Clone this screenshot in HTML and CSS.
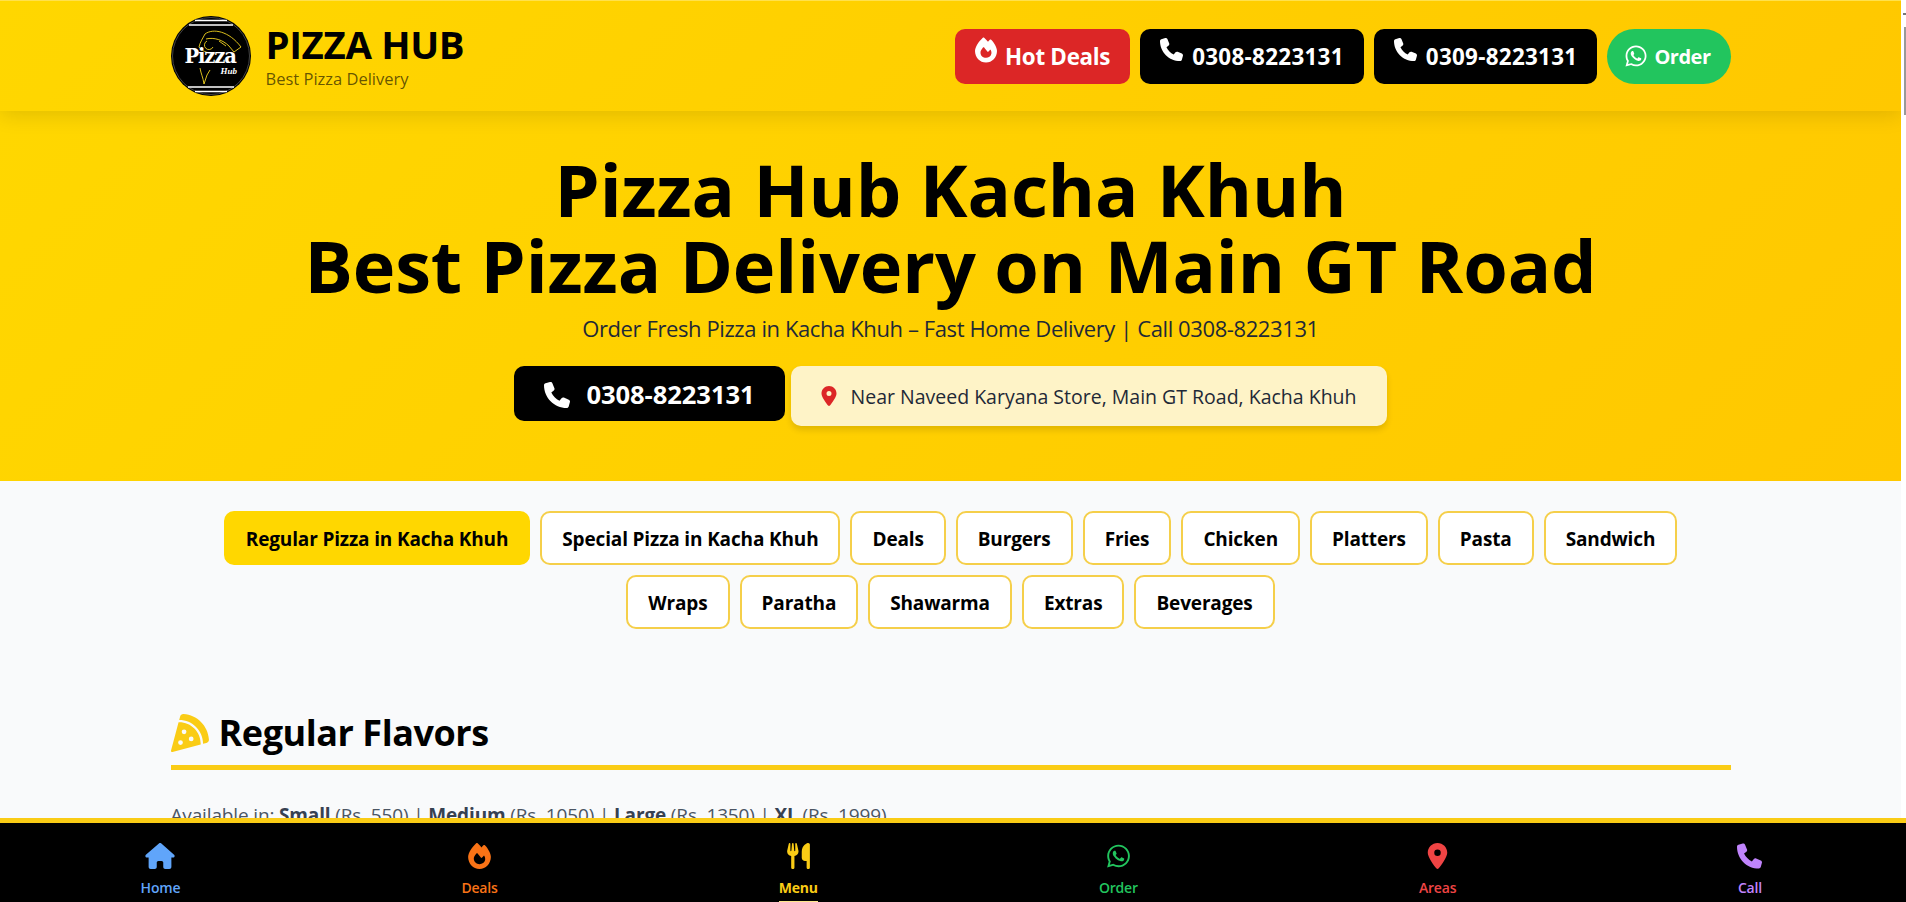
FILE: index.html
```html
<!DOCTYPE html>
<html lang="en">
<head>
<meta charset="utf-8">
<title>Pizza Hub Kacha Khuh</title>
<link rel="stylesheet" href="styles.css">
</head>
<body>
<svg class="defs" width="0" height="0" aria-hidden="true">
  <defs>
    <symbol id="i-phone" viewBox="0 0 512 512"><path fill="currentColor" d="M164.900 24.600c-7.700-18.600-28-28.500-47.400-23.200l-88 24C12.100 30.200 0 46 0 64C0 311.400 200.600 512 448 512c18 0 33.800-12.100 38.600-29.500l24-88c5.300-19.400-4.600-39.700-23.200-47.400l-96-40c-16.300-6.800-35.200-2.100-46.300 11.600L304.700 368C234.300 334.700 177.300 277.700 144 207.300L193.300 167c13.700-11.200 18.400-30 11.600-46.300l-40-96z"/></symbol>
    <symbol id="i-fire" viewBox="0 0 448 512"><path fill="currentColor" d="M159.300 5.400c7.800-7.300 19.900-7.200 27.700 .1c27.600 25.900 53.500 53.800 77.700 84c11-14.400 23.500-30.100 37-42.900c7.900-7.400 20.100-7.400 28 .1c34.600 33 63.900 76.600 84.500 118c20.300 40.800 33.800 82.500 33.800 111.900C448 404.200 348.200 512 224 512C98.400 512 0 404.100 0 276.500c0-38.400 17.800-85.300 45.400-131.700C73.300 97.700 112.700 48.600 159.300 5.400zM225.700 416c25.300 0 47.700-7 68.800-21c42.100-29.400 53.400-88.200 28.100-134.400c-4.500-9-16-9.600-22.500-2l-25.200 29.300c-6.600 7.600-18.500 7.400-24.700-.5c-16.500-21-46-58.500-62.800-79.800c-6.300-8-18.300-8.100-24.700-.1c-33.800 42.500-50.800 69.300-50.800 99.400C112 375.400 162.600 416 225.700 416z"/></symbol>
    <symbol id="i-wa" viewBox="0 0 448 512"><path fill="currentColor" d="M380.900 97.100C339 55.100 283.200 32 223.900 32c-122.400 0-222 99.600-222 222 0 39.100 10.200 77.300 29.600 111L0 480l117.700-30.900c32.400 17.700 68.900 27 106.100 27h.1c122.300 0 224.100-99.600 224.100-222 0-59.300-25.200-115-67.100-157zm-157 341.600c-33.200 0-65.700-8.900-94-25.700l-6.700-4-69.800 18.300L72 359.200l-4.400-7c-18.500-29.400-28.200-63.300-28.200-98.200 0-101.700 82.800-184.500 184.600-184.500 49.300 0 95.600 19.200 130.400 54.100 34.800 34.900 56.200 81.200 56.100 130.500 0 101.800-84.900 184.600-186.600 184.600zm101.200-138.200c-5.500-2.800-32.800-16.200-37.900-18-5.100-1.900-8.800-2.800-12.500 2.800-3.700 5.600-14.300 18-17.600 21.800-3.200 3.700-6.500 4.200-12 1.400-32.600-16.300-54-29.100-75.500-66-5.700-9.800 5.700-9.100 16.300-30.300 1.800-3.700 .9-6.900-.5-9.700-1.400-2.800-12.500-30.100-17.100-41.200-4.500-10.800-9.100-9.300-12.500-9.500-3.200-.2-6.900-.2-10.600-.2-3.700 0-9.700 1.400-14.800 6.900-5.100 5.600-19.400 19-19.400 46.300 0 27.300 19.900 53.700 22.600 57.400 2.800 3.700 39.100 59.700 94.800 83.800 35.200 15.200 49 16.500 66.600 13.900 10.700-1.600 32.800-13.400 37.400-26.400 4.600-13 4.600-24.100 3.200-26.400-1.300-2.500-5-3.900-10.500-6.600z"/></symbol>
    <symbol id="i-pin" viewBox="0 0 384 512"><path fill="currentColor" d="M215.700 499.200C267 435 384 279.400 384 192C384 86 298 0 192 0S0 86 0 192c0 87.400 117 243 168.300 307.200c12.300 15.300 35.100 15.300 47.400 0zM192 128a64 64 0 1 1 0 128 64 64 0 1 1 0-128z"/></symbol>
    <symbol id="i-home" viewBox="0 0 576 512"><path fill="currentColor" d="M575.800 255.500c0 18-15 32.100-32 32.100h-32l.7 160.200c0 2.700-.2 5.400-.5 8.100V472c0 22.100-17.900 40-40 40H456c-1.100 0-2.200 0-3.300-.1c-1.400 .1-2.800 .1-4.200 .1H416 392c-22.100 0-40-17.900-40-40V448 384c0-17.700-14.300-32-32-32H256c-17.700 0-32 14.300-32 32v64 24c0 22.100-17.900 40-40 40H160 128.100c-1.500 0-3-.1-4.500-.2c-1.200 .1-2.400 .2-3.600 .2H104c-22.100 0-40-17.900-40-40V360c0-.9 0-1.900 .1-2.800V287.600H32c-18 0-32-14-32-32.100c0-9 3-17 10-24L266.400 8c7-7 15-8 22-8s15 2 21 7L564.800 231.500c8 7 12 15 11 24z"/></symbol>
    <symbol id="i-menu" viewBox="0 0 448 512"><path fill="currentColor" d="M416 0C400 0 288 32 288 176V288c0 35.300 28.700 64 64 64h32V480c0 17.700 14.300 32 32 32s32-14.300 32-32V352 240 32c0-17.700-14.300-32-32-32zM64 16C64 7.800 57.900 1 49.700 .1S34.200 4.600 32.400 12.500L2.100 148.800C.7 155.100 0 161.500 0 167.900c0 45.900 35.100 83.600 80 87.700V480c0 17.700 14.300 32 32 32s32-14.300 32-32V255.600c44.900-4.100 80-41.800 80-87.700c0-6.400-.7-12.800-2.100-19.100L191.600 12.500c-1.800-8-9.300-13.300-17.400-12.400S160 7.800 160 16V150.200c0 5.400-4.400 9.800-9.800 9.800c-5.100 0-9.300-3.900-9.800-9L127.900 14.600C127.200 6.300 120.300 0 112 0s-15.200 6.300-15.900 14.600L83.700 151c-.5 5.100-4.700 9-9.800 9c-5.400 0-9.800-4.400-9.800-9.800V16z"/></symbol>
    <symbol id="i-slice" viewBox="0 0 512 512"><path fill="currentColor" d="M169.700 .9c-22.800-1.600-41.900 14-47.500 34.700L110.400 80c.5 0 1.100 0 1.600 0c176.700 0 320 143.300 320 320c0 .5 0 1.100 0 1.600l44.400-11.800c20.700-5.500 36.300-24.700 34.700-47.500C498.500 159.500 352.500 13.500 169.700 .9zM399.800 410.200c.1-3.400 .2-6.800 .2-10.200c0-159.100-128.900-288-288-288c-3.400 0-6.800 .1-10.200 .2L.5 491.900c-1.500 5.500 .1 11.400 4.100 15.400s9.900 5.600 15.400 4.100L399.800 410.200zM176 208a32 32 0 1 1 0 64 32 32 0 1 1 0-64zm64 128a32 32 0 1 1 64 0 32 32 0 1 1 -64 0zM96 384a32 32 0 1 1 64 0 32 32 0 1 1 -64 0z"/></symbol>
  </defs>
</svg>

<header class="topbar">
  <div class="wrap topbar-row">
    <a class="brand" href="#">
      <svg class="logo" viewBox="0 0 80 80" aria-hidden="true">
        <circle cx="40" cy="40" r="40" fill="#000"/>
        <circle cx="40" cy="40" r="38.500" fill="none" stroke="#555" stroke-width=".8"/>
        <path class="logo-stripe" d="M24 4.500h32M18 9h44M17 71h46M24 75.500h32"/>
        <path class="logo-line" d="M34 18c8-6 24-3 36 13l-7 5-5-6c-6-6-15-9-23-7M34 18c-2 4-5 8-6 13 3 4 8 6 13 6M36 25a4.500 4.500 0 1 0 6 6M48 25l7 5M29 52c1 6 3 9 4 16l3-9 3-5"/>
      </svg>
      <span class="logo-word">Pizza</span>
      <span class="logo-sub">Hub</span>
      <span class="brand-text">
        <strong class="brand-name">PIZZA HUB</strong>
        <small class="brand-tag">Best Pizza Delivery</small>
      </span>
    </a>
    <nav class="actions">
      <a class="act act-red" href="#"><svg class="ic ic-up"><use href="#i-fire"/></svg>Hot Deals</a>
      <a class="act act-black" href="#"><svg class="ic-tel ic-up"><use href="#i-phone"/></svg>0308-8223131</a>
      <a class="act act-black" href="#"><svg class="ic-tel ic-up"><use href="#i-phone"/></svg>0309-8223131</a>
      <a class="act act-green" href="#"><svg class="ic ic-wa"><use href="#i-wa"/></svg>Order</a>
    </nav>
  </div>
</header>

<section class="hero">
  <h1 class="hero-title">Pizza Hub Kacha Khuh<br>Best Pizza Delivery on Main GT Road</h1>
  <p class="hero-sub">Order Fresh Pizza in Kacha Khuh – Fast Home Delivery | Call 0308-8223131</p>
  <div class="hero-cta">
    <a class="call" href="#"><svg class="call-ic"><use href="#i-phone"/></svg>0308-8223131</a>
    <div class="addr"><svg class="addr-ic"><use href="#i-pin"/></svg>Near Naveed Karyana Store, Main GT Road, Kacha Khuh</div>
  </div>
</section>

<main class="content">
  <div class="tabs">
    <button class="tab tab-on">Regular Pizza in Kacha Khuh</button>
    <button class="tab">Special Pizza in Kacha Khuh</button>
    <button class="tab">Deals</button>
    <button class="tab">Burgers</button>
    <button class="tab">Fries</button>
    <button class="tab">Chicken</button>
    <button class="tab">Platters</button>
    <button class="tab">Pasta</button>
    <button class="tab">Sandwich</button>
    <button class="tab">Wraps</button>
    <button class="tab">Paratha</button>
    <button class="tab">Shawarma</button>
    <button class="tab">Extras</button>
    <button class="tab">Beverages</button>
  </div>
  <div class="wrap">
    <h2 class="sec-title"><svg class="sec-ic"><use href="#i-slice"/></svg>Regular Flavors</h2>
    <p class="sec-note">Available in: <b>Small</b> (Rs. 550) | <b>Medium</b> (Rs. 1050) | <b>Large</b> (Rs. 1350) | <b>XL</b> (Rs. 1999)</p>
  </div>
</main>

<div class="scrollbar"><span class="scroll-arrow"></span><span class="scroll-thumb"></span></div>

<nav class="dock">
  <a class="dock-item c-blue" href="#"><svg class="dock-ic dock-ic-wide"><use href="#i-home"/></svg>Home</a>
  <a class="dock-item c-orange" href="#"><svg class="dock-ic"><use href="#i-fire"/></svg>Deals</a>
  <a class="dock-item c-yellow dock-on" href="#"><svg class="dock-ic"><use href="#i-menu"/></svg>Menu</a>
  <a class="dock-item c-green" href="#"><svg class="dock-ic"><use href="#i-wa"/></svg>Order</a>
  <a class="dock-item c-red" href="#"><svg class="dock-ic"><use href="#i-pin"/></svg>Areas</a>
  <a class="dock-item c-purple" href="#"><svg class="dock-ic"><use href="#i-phone"/></svg>Call</a>
</nav>
</body>
</html>
```

FILE: styles.css
```css
* { box-sizing: border-box; }
html, body { margin: 0; height: 100%; overflow: hidden; }
body {
  font-family: "Open Sans", "Noto Sans", sans-serif;
  background: #f9fafb;
  color: #000;
  padding-right: 5px;
}
a { color: inherit; text-decoration: none; }
.defs { position: absolute; }
.wrap { width: 1560px; margin: 0 auto; }

.scrollbar { position: fixed; top: 0; right: 0; bottom: 0; width: 5px; background: #fff; }
.scroll-arrow { position: absolute; top: 13px; right: 0; width: 3px; height: 2px; background: #777; }
.scroll-thumb { position: absolute; top: 27px; right: 0; width: 2px; height: 88px; background: #999; }

.topbar {
  height: 111px;
  padding-top: 15px;
  border-top: 1px solid #ffe14d;
  background: linear-gradient(135deg, #ffd700, #ffc800);
  box-shadow: 0 4px 20px rgba(0, 0, 0, .12);
  position: relative;
}
.topbar-row { display: flex; justify-content: space-between; align-items: center; height: 80px; }
.brand { display: flex; align-items: center; gap: 15px; position: relative; }
.logo { width: 80px; height: 80px; display: block; }
.logo-stripe { stroke: #fff; stroke-width: 1.500; fill: none; }
.logo-line { stroke: #f2d21f; stroke-width: .9; fill: none; }
.logo-word { position: absolute; left: 14px; top: 29px; color: #fff; font-weight: 700; font-size: 19.500px; letter-spacing: -1.100px; line-height: 24px; font-family: "DejaVu Serif", serif; }
.logo-sub { position: absolute; left: 50px; top: 49px; color: #fff; font-size: 9px; font-weight: 700; font-style: italic; line-height: 12px; font-family: "Liberation Serif", serif; }
.brand-text { display: flex; flex-direction: column; }
.brand-name { font-size: 38.400px; font-weight: 700; line-height: 44px; letter-spacing: -.35px; }
.brand-tag { font-size: 16.500px; line-height: 24px; margin-top: 1px; color: rgba(0, 0, 0, .62); }

.actions { display: flex; gap: 10px; }
.act {
  height: 55px; display: flex; align-items: center; gap: 8px;
  padding: 0 20px; border-radius: 10px;
  font-size: 22.400px; font-weight: 700; color: #fff; letter-spacing: -.3px;
}
.act-red { background: #dc2626; }
.act-black { background: #000; letter-spacing: .3px; gap: 9px; }
.act-green { background: #22c55e; border-radius: 28px; font-size: 20px; padding: 0 20px 0 18px; letter-spacing: -.5px; }
.ic { width: 22px; height: 26px; }
.ic-tel { width: 23px; height: 23px; }
.ic-up { margin-top: -13px; }
.ic-wa { width: 22px; height: 24px; margin-right: -1px; }

.hero {
  height: 370px;
  background: linear-gradient(135deg, #ffd700, #ffc800);
  text-align: center;
  padding-top: 40px;
}
.hero-title { margin: 0; font-size: 72px; line-height: 76px; font-weight: 700; letter-spacing: -.1px; }
.hero-sub { margin: 10px 0 0; font-size: 22px; line-height: 30px; color: #1f2937; letter-spacing: -.4px; }
.hero-cta { display: flex; justify-content: center; align-items: flex-start; gap: 6px; margin-top: 23px; }
.call {
  height: 55px; display: flex; align-items: center; gap: 16px; padding: 2px 30px 0;
  background: #000; color: #fff; border-radius: 10px;
  font-size: 25.600px; font-weight: 700; letter-spacing: -.1px;
}
.call-ic { width: 26px; height: 26px; }
.addr {
  height: 60px; display: flex; align-items: center; gap: 14px; padding: 0 30px;
  background: #fef3c7; color: #1f2937; border-radius: 10px;
  font-size: 19.500px; font-weight: 500;
  box-shadow: 0 4px 6px rgba(0, 0, 0, .12);
}
.addr-ic { width: 16px; height: 20px; color: #dc2626; }

.content { padding-top: 30px; }
.tabs { display: flex; flex-wrap: wrap; justify-content: center; gap: 10px; width: 1560px; margin: 0 auto; }
.tab {
  height: 54px; padding: 2px 20px 0;
  font: 700 19px "Open Sans", sans-serif; letter-spacing: -.15px;
  color: #000; background: #fff;
  border: 2px solid #f5cf4a; border-radius: 10px;
}
.tab-on { background: #ffd700; border-color: #ffd700; }

.sec-title {
  margin: 81px 0 0; padding-bottom: 10px;
  display: flex; align-items: center; gap: 10px;
  font-size: 36px; line-height: 45px; font-weight: 700; letter-spacing: -.45px;
  border-bottom: 5px solid #facc15;
}
.sec-ic { width: 38px; height: 38px; color: #facc15; }
.sec-note { margin: 30px 0 0; font-size: 19px; line-height: 30px; color: #4b5563; letter-spacing: -.15px; }
.sec-note b { color: #374151; }

.dock {
  position: fixed; left: 0; right: 0; bottom: 0; height: 84px; padding-right: 3px;
  display: flex; justify-content: space-around;
  background: #000; border-top: 5px solid #facc15;
}
.dock-item {
  display: flex; flex-direction: column; align-items: center;
  padding-top: 20px; font-size: 14px; font-weight: 600; line-height: 19px; letter-spacing: -.2px;
  position: relative;
}
.dock-ic { width: 25px; height: 26px; margin-bottom: 9px; }
.dock-ic-wide { width: 30px; }
.dock-on { font-weight: 700; }
.dock-on::after { content: ""; position: absolute; left: 0; right: 0; bottom: 0; height: 1px; background: #fde68a; }
.c-blue { color: #60a5fa; }
.c-orange { color: #f97316; }
.c-yellow { color: #facc15; }
.c-green { color: #22c55e; }
.c-red { color: #ef4444; }
.c-purple { color: #c084fc; }
```
